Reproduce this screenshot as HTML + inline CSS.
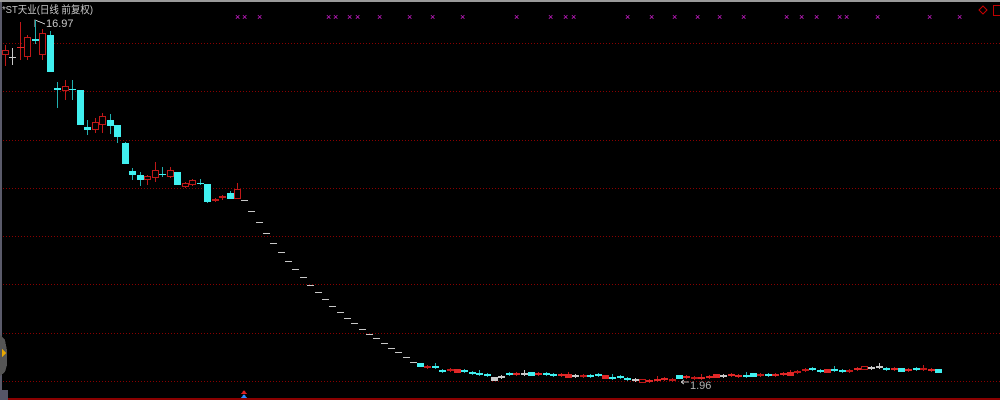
<!DOCTYPE html>
<html><head><meta charset="utf-8">
<style>
html,body{margin:0;padding:0;background:#000;width:1000px;height:400px;overflow:hidden;font-family:"Liberation Sans","Noto Sans CJK SC",sans-serif}
svg{position:absolute;left:0;top:0}
</style></head><body>
<svg id="s" width="1000" height="400" xmlns="http://www.w3.org/2000/svg" shape-rendering="crispEdges">
<rect x="0" y="0" width="1000" height="2" fill="#9a9a9a"/>
<rect x="0" y="2" width="2" height="398" fill="#5a5a6a"/>
<g stroke="#8a0000" stroke-width="1" stroke-dasharray="1,2">
<line x1="3" y1="43.5" x2="1000" y2="43.5"/>
<line x1="3" y1="91.5" x2="1000" y2="91.5"/>
<line x1="3" y1="140.5" x2="1000" y2="140.5"/>
<line x1="3" y1="188.5" x2="1000" y2="188.5"/>
<line x1="3" y1="236.5" x2="1000" y2="236.5"/>
<line x1="3" y1="284.5" x2="1000" y2="284.5"/>
<line x1="3" y1="333.5" x2="1000" y2="333.5"/>
<line x1="3" y1="381.5" x2="1000" y2="381.5"/>
</g>
<rect x="8" y="398" width="992" height="2" fill="#8a0000"/>
<path d="M0 335 L5 340 L7 350 L7 365 L5 372 L0 376Z" fill="#555"/>
<path d="M2 349 L6 353 L2 357Z" fill="#e8a800"/>
<rect x="0" y="390" width="8" height="10" fill="#556"/>
<path d="M241 394 L244 390 L247 394Z" fill="#e02020"/>
<path d="M241 398 L244 394 L247 398Z" fill="#2a8aff"/>
<path d="M983 6 L987 10 L983 14 L979 10Z" fill="none" stroke="#c00000"/>
<rect x="993.5" y="5.5" width="8" height="10" fill="none" stroke="#c00000"/>
<text x="2" y="13" font-size="10.5" fill="#c8c8c8" textLength="91" lengthAdjust="spacingAndGlyphs">*ST天业(日线 前复权)</text>
<path d="M35 27 L35 20 L45 24" fill="none" stroke="#c8c8c8" stroke-width="1"/>
<text x="46" y="27" font-size="11" fill="#c8c8c8">16.97</text>
<text x="690" y="389" font-size="11" fill="#b0b0b0">1.96</text>
<path d="M681 382 L689 382 M681 382 L684 380 M681 382 L684 384" stroke="#b0b0b0" fill="none"/>
<g id="c"></g>
</svg>
<script>
var g=document.getElementById('c'),h='';
var R='#e02828',C='#40f0f0',W='#c8c8c8',Rd='#c01818';
var d=[[5,50,55,45,66,'r'],[12,57,58,48,65,'w'],[20,47,48,22,60,'R'],[27,37,57,35,60,'r'],[35,39,41,20,44,'c'],[42,33,55,29,60,'r'],[50,35,72,31,72,'c'],
[57,88,90,82,108,'c'],[65,86,91,80,100,'r'],[72,89,90,80,100,'c'],[80,90,125,90,125,'c'],[87,127,130,120,135,'c'],[95,122,130,118,133,'r'],[102,116,125,113,133,'r'],
[110,120,126,114,134,'c'],[117,125,137,125,143,'c'],[125,143,164,142,164,'c'],[132,171,175,168,180,'c'],[140,175,180,172,186,'c'],[147,176,180,175,185,'r'],
[155,170,178,162,182,'r'],[162,174,175,167,177,'c'],[170,170,177,167,178,'r'],[177,172,185,172,185,'c'],[185,183,187,182,188,'r'],[192,180,185,179,186,'r'],
[200,183,184,179,185,'c'],[207,184,202,184,203,'c'],[215,199,201,198,202,'r'],[222,196,198,195,200,'r'],[230,193,199,191,199,'c'],[237,189,199,183,199,'r']];
var dash=[200,211,222,233,243,252,261,269,277,285,292,299,306,312,318,323,329,334,338,343,348,352,357,362];
for(var i=0;i<dash.length;i++)d.push([244+i*7.35,dash[i],dash[i]+1,dash[i],dash[i]+1,'w']);
var low=[365,367,367,371,370,371,371,373,374,375,379,377,374,374,374,374,374,374,375,375,376,376,376,376,375,377,378,377,379,380,381,381,380,379,380,377,377,378,378,377,376,376,375,376,376,375,375,375,375,374,374,372,370,369,371,371,370,371,371,369,368,368,367,369,369,370,370,369,369,370,371];
var tp='c r c c r R c c c c w w c R w c R c c R R w r c c R c c c w r R R R r c R r R R R w R R c c r c R R R r r c c R c c r R r w w c R c R c r R';
var ts=tp.split(' ');
for(var i=0;i<low.length;i++){var y=low[i];var t=ts[i%ts.length]||'c';var big=(i*7)%5==0;d.push([420+i*7.4,y-(big?2:1),y+(big?2:1),y-(i%6==2?4:2),y+2,t]);}
d.forEach(function(a){var x=Math.round(a[0]),t=a[5],col=t=='c'?C:t=='w'?W:R;
var wc=t=='r'||t=='R'?Rd:(t=='c'?'#20b0b0':W);
h+='<line x1="'+(x+.5)+'" y1="'+a[3]+'" x2="'+(x+.5)+'" y2="'+a[4]+'" stroke="'+wc+'"/>';
var bh=Math.max(a[2]-a[1],1);
if(t=='r')h+='<rect x="'+(x-2.5)+'" y="'+(a[1]+.5)+'" width="6" height="'+Math.max(bh-1,1)+'" fill="#000" stroke="'+Rd+'"/>';
else h+='<rect x="'+(x-3)+'" y="'+a[1]+'" width="7" height="'+bh+'" fill="'+col+'"/>';});
var mx=[238,245,260,329,336,350,358,380,410,433,463,517,551,566,574,628,652,675,698,720,744,787,802,817,840,847,878,930,960];
mx.forEach(function(x){h+='<text x="'+(x-3)+'" y="20" font-size="9" fill="#e020e0">×</text>';});
g.innerHTML=h;
</script>
</body></html>
